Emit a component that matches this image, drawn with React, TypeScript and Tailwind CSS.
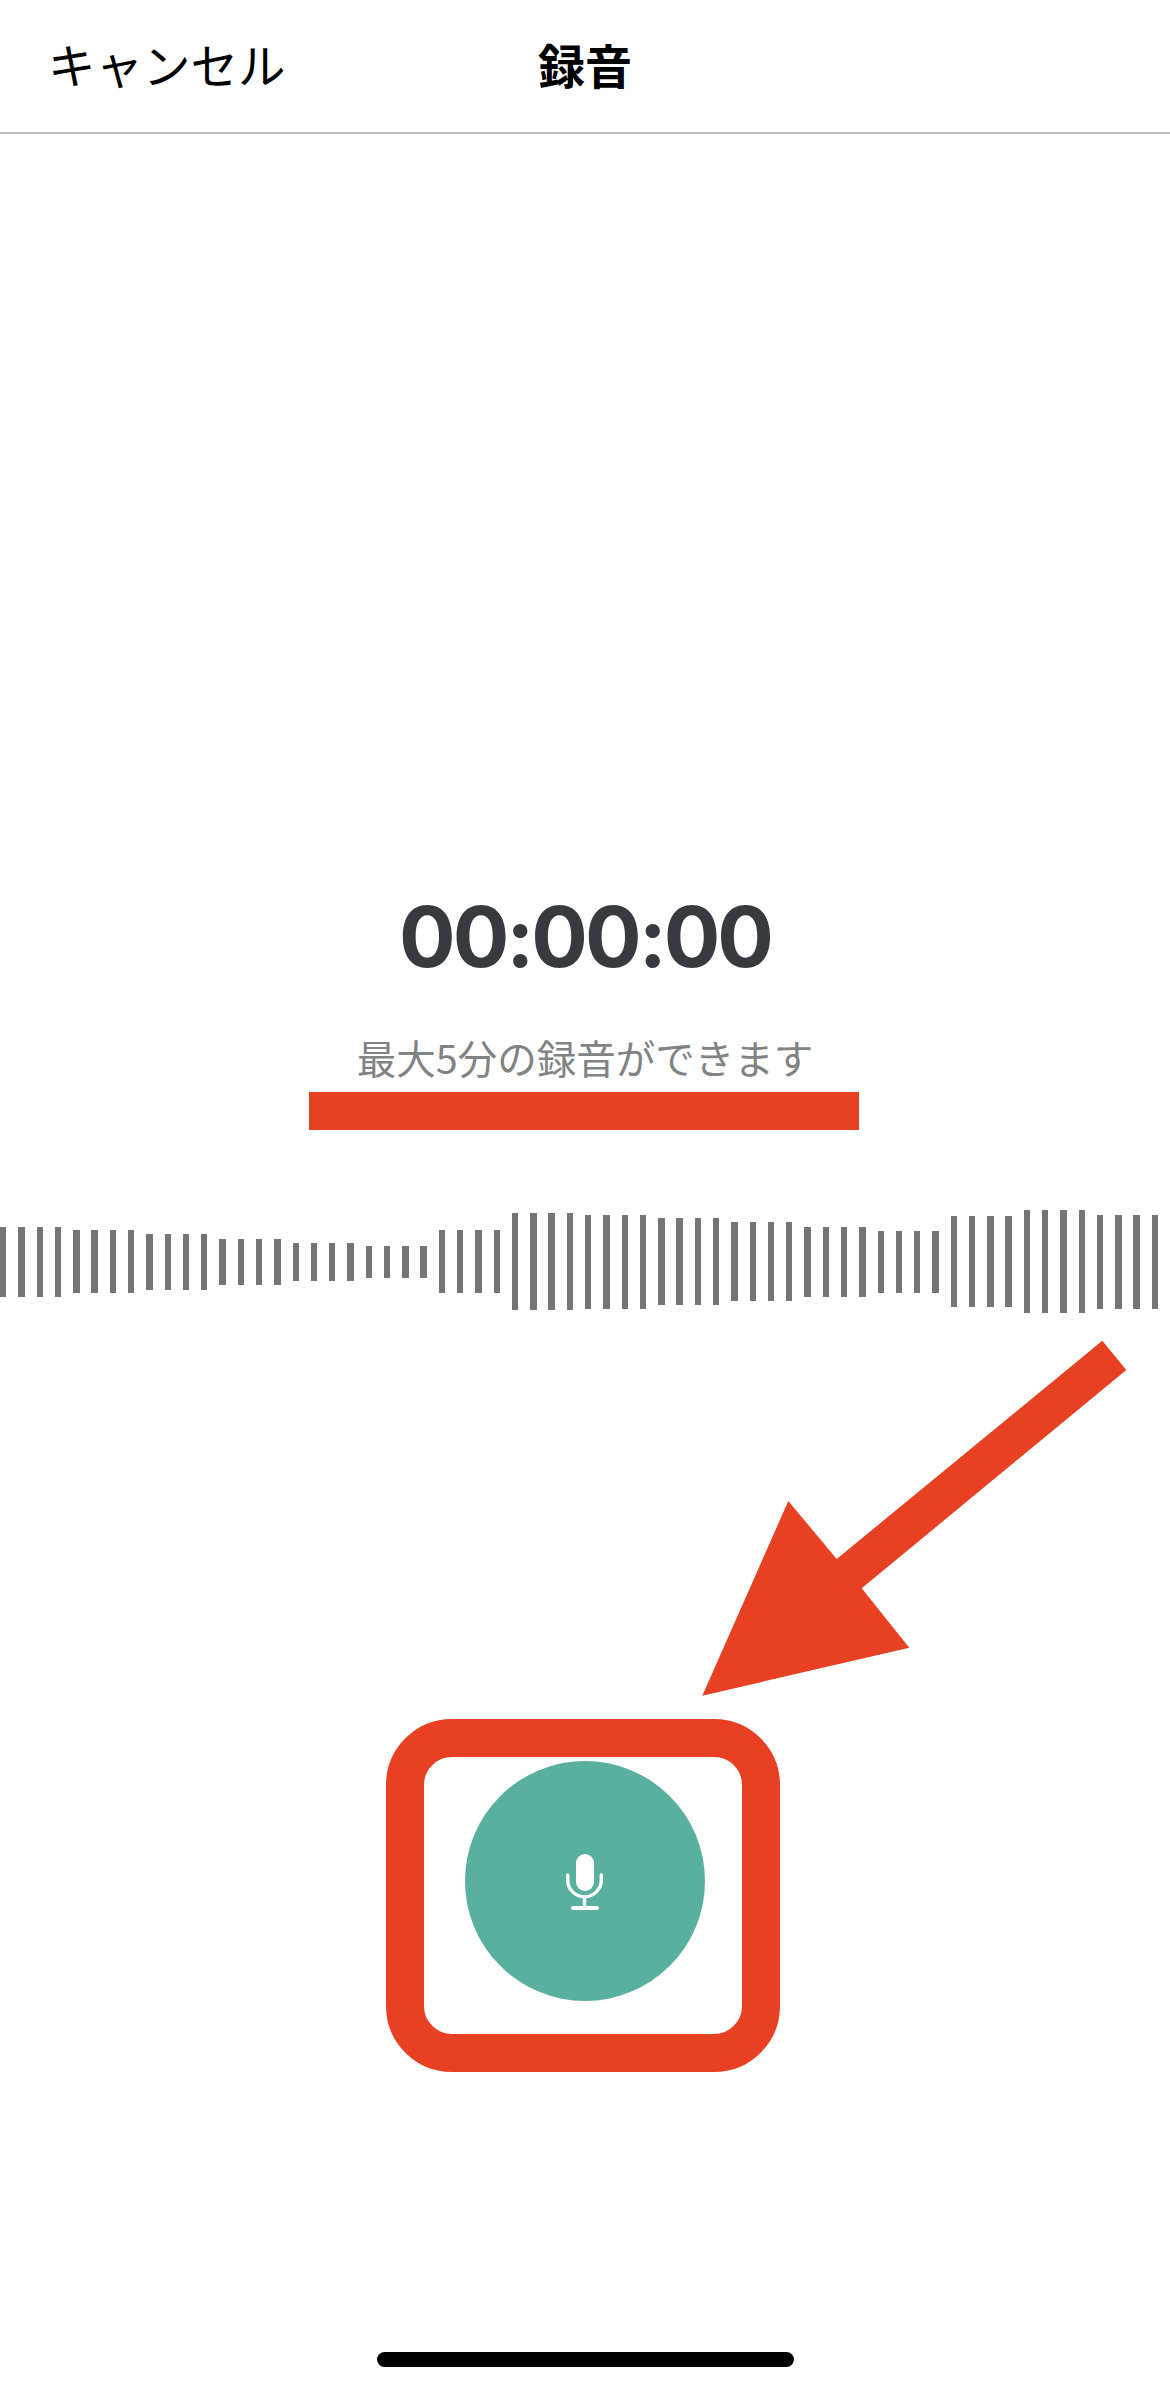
import React from 'react';

// bar heights per group of four, left to right
const groups = [70, 63, 56, 46, 38, 32, 63, 97, 94, 87, 79, 70, 62, 91, 103, 94];
const bars = groups.flatMap(h => [h, h, h, h]);

const MicIcon = () => (
  <svg width="40" height="60" viewBox="0 0 40 60" fill="none">
    <rect x="11" y="3" width="18" height="37" rx="9" fill="#fff" />
    <path d="M2.7 24v5a16.8 16.8 0 0 0 33.6 0v-5" stroke="#fff" strokeWidth="3.4" strokeLinecap="round" />
    <path d="M19.5 46v10" stroke="#fff" strokeWidth="3.4" />
    <rect x="6" y="55" width="28" height="4" rx="2" fill="#fff" />
  </svg>
);

export default function App() {
  return (
    <div className="relative w-[1170px] h-[2391px] overflow-hidden bg-white font-['Noto_Sans_CJK_JP',sans-serif]">
      <header className="grid grid-cols-[1fr_auto_1fr] items-center h-[134px] pb-[5px] border-b-2 border-[#bdbdbd] text-black">
        <span className="pl-[48px] text-[47.5px] leading-[60px] font-normal">キャンセル</span>
        <h1 className="text-[47px] leading-[60px] font-bold">録音</h1>
        <span />
      </header>

      <main className="flex flex-col items-center">
        <div className="mt-[753px] h-[100px] text-[84px] leading-[100px] tracking-[-3px] font-bold text-[#373a3f] font-['Inter',sans-serif]">
          00:00:00
        </div>
        <p className="mt-[45px] text-[39.5px] leading-[50px] font-normal text-[#808384]">最大5分の録音ができます</p>
        <div className="mt-[10px] mr-[3px] w-[550px] h-[38px] bg-[#e84023]" />

        <div className="mt-[80px] flex items-center w-full h-[103px]">
          {bars.map((h, i) => (
            <div key={i} className="flex-1">
              <div className="w-[6.4px] bg-[#717576]" style={{ height: h }} />
            </div>
          ))}
        </div>

        <button className="mt-[448px] flex items-center justify-center w-[240px] h-[240px] rounded-full bg-[#5ab09e]">
          <MicIcon />
        </button>

        <div className="mt-[351px] w-[417px] h-[15px] rounded-full bg-black" />
      </main>

      {/* red annotations over the screenshot */}
      <div className="absolute left-[386px] top-[1719px] w-[394px] h-[353px] border-[38px] border-[#e84023] rounded-[66px]" />
      <svg className="absolute left-[700px] top-[1338px]" width="430" height="360" viewBox="0 0 430 360">
        <polygon
          points="402.3,2.7 426.3,32 161.7,250.3 209.3,309.7 2.3,357.7 88.3,163 136.7,221"
          fill="#e84023"
        />
      </svg>
    </div>
  );
}
